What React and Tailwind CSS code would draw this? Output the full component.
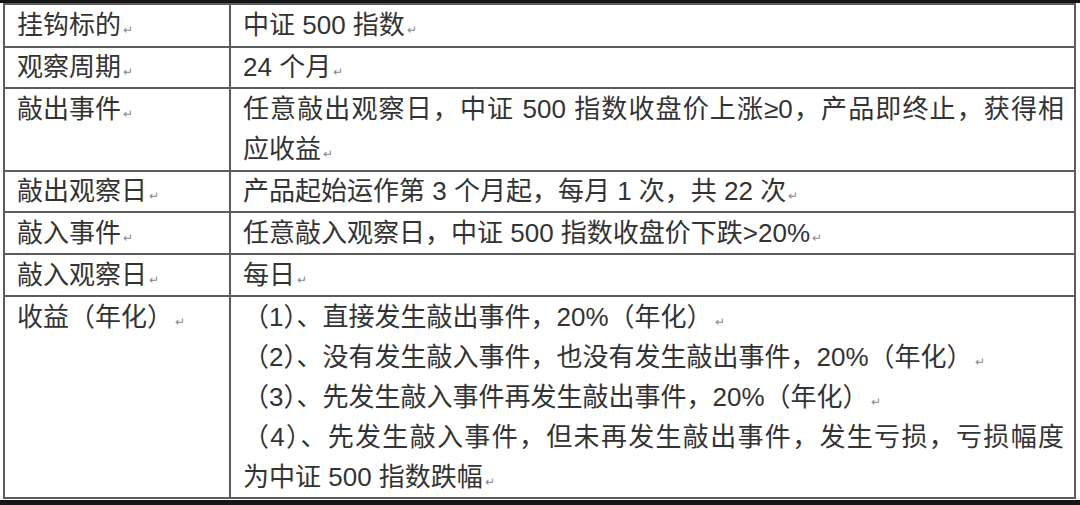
import React from 'react';

// one row of the terms table: label on the left, one or more lines on the right
const Mark = () => <span className="text-[12px] leading-none text-[#8a8a8a] ml-[2px]">↵</span>;

const rows = [
  { label: '挂钩标的', lh: 'leading-[41px] h-[41px]', lines: [{ t: '中证 500 指数' }] },
  { label: '观察周期', lh: 'leading-[39px] h-[39px]', lines: [{ t: '24 个月' }] },
  {
    label: '敲出事件',
    lh: 'leading-[40px] h-[40px]',
    extra: 'pb-[1px]',
    lines: [
      { t: '任意敲出观察日，中证 500 指数收盘价上涨≥0，产品即终止，获得相', wrap: true, noMark: true },
      { t: '应收益' },
    ],
  },
  { label: '敲出观察日', lh: 'leading-[39px] h-[39px]', lines: [{ t: '产品起始运作第 3 个月起，每月 1 次，共 22 次' }] },
  { label: '敲入事件', lh: 'leading-[40px] h-[40px]', lines: [{ t: '任意敲入观察日，中证 500 指数收盘价下跌>20%' }] },
  { label: '敲入观察日', lh: 'leading-[40px] h-[40px]', lines: [{ t: '每日' }] },
  {
    label: '收益（年化）',
    lh: 'leading-[40px] h-[40px]',
    lines: [
      { t: '（1）、直接发生敲出事件，20%（年化）' },
      { t: '（2）、没有发生敲入事件，也没有发生敲出事件，20%（年化）' },
      { t: '（3）、先发生敲入事件再发生敲出事件，20%（年化）' },
      { t: '（4）、先发生敲入事件，但未再发生敲出事件，发生亏损，亏损幅度', wrap: true, noMark: true },
      { t: '为中证 500 指数跌幅' },
    ],
    last: true,
  },
];

const App = () => {
  return (
    <div className="w-[1080px] h-[505px] bg-white overflow-hidden flex flex-col font-['Liberation_Sans','Noto_Sans_CJK_SC',sans-serif]">
      <div className="h-[3px] shrink-0 bg-[#161616]" />

      <div className="ml-[3px] w-[1073px] shrink-0 border-2 border-[#5c5c5c] text-[26px] text-[#333333]">
        {rows.map((row) => (
          <div
            key={row.label}
            className={`grid grid-cols-[226px_1fr] ${row.last ? '' : 'border-b-2 border-[#5c5c5c]'}`}
          >
            <div className="pl-3 border-r-2 border-[#5c5c5c]">
              <div className={`whitespace-nowrap ${row.lh}`}>
                {row.label}
                <Mark />
              </div>
            </div>
            <div className={`pl-3 pr-[10px] ${row.extra || ''}`}>
              {row.lines.map((line, i) => (
                <div
                  key={i}
                  className={`${row.lh} whitespace-nowrap ${line.wrap ? 'text-justify [text-align-last:justify]' : ''}`}
                >
                  {line.t}
                  {!line.noMark && <Mark />}
                </div>
              ))}
            </div>
          </div>
        ))}
      </div>

      <div className="flex-1" />
      <div className="h-[5px] shrink-0 bg-[#161616]" />
    </div>
  );
};

export default App;
